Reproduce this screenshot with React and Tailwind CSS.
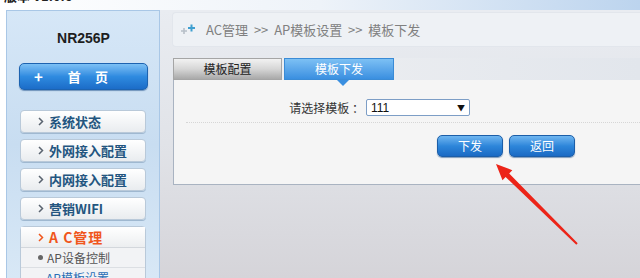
import React from "react";

const cjk = { fontFamily: '"Noto Sans CJK SC", "Liberation Sans", sans-serif' };

const Chevron = ({ color }) => (
  <svg width="6" height="9" viewBox="0 0 6 9" className="ml-[17px] mr-[5px]">
    <path d="M1 1l3.5 3.5L1 8" fill="none" stroke={color} strokeWidth="1.5" />
  </svg>
);

const MenuItem = ({ label }) => (
  <div className="h-[23px] w-[126px] flex items-center rounded-[4px] border border-[#b9c9d9] bg-gradient-to-b from-white to-[#e9ecef] shadow-[0_1px_0_#9fb8d0]">
    <Chevron color="#5a6470" />
    <span className="text-[13px] font-bold text-[#23557f] leading-none">{label}</span>
  </div>
);

const BlueButton = ({ label }) => (
  <button className="w-[66px] h-[22px] rounded-[5px] border border-[#1c5ea8] bg-gradient-to-b from-[#6fb6f0] via-[#2d86da] to-[#1b6ac4] text-white text-[12px] leading-none shadow-[0_1px_1px_#7f9bbb]">
    {label}
  </button>
);

export default function App() {
  return (
    <div className="relative w-[640px] h-[278px] overflow-hidden bg-white" style={cjk}>
      {/* top strip */}
      <div className="h-[10px] overflow-hidden bg-gradient-to-r from-white via-[#eef3f9] to-[#bcd4ee]">
        <div className="-mt-[11px] pl-[4px] text-[13px] font-bold text-[#222] leading-[14px]">版本 V1.0.6</div>
      </div>

      <div className="flex h-[268px]">
        {/* sidebar */}
        <div className="w-[160px] pl-[6px] bg-white">
          <div className="h-full border-l border-r border-t border-[#a9c7e6] bg-gradient-to-b from-[#d6e7f7] via-[#c8ddf1] to-[#d8e8f6] pl-[12px]">
            <div className="pt-[19px] h-[52px] w-[129px] text-center text-[14px] font-bold text-[#1e1e1e] leading-[16px]" style={{ fontFamily: '"Liberation Sans", sans-serif' }}>
              NR256P
            </div>
            <div className="w-[129px] h-[27px] rounded-[5px] border border-[#1d63b0] bg-gradient-to-b from-[#7cc0f4] via-[#2f8be0] to-[#1c6cc8] flex items-center text-white font-bold text-[13px] shadow-[0_1px_1px_#6f93bb]">
              <span className="ml-[14px] text-[15px] leading-none">+</span>
              <span className="ml-[25px]">首</span>
              <span className="ml-[14px]">页</span>
            </div>
            <div className="mt-[20px] ml-[1px] flex flex-col gap-[6px]">
              <MenuItem label="系统状态" />
              <MenuItem label="外网接入配置" />
              <MenuItem label="内网接入配置" />
              <MenuItem label="营销WIFI" />
              <div className="w-[126px] h-[80px] rounded-t-[4px] border border-[#b9c9d9] bg-[#f2f3f5]">
                <div className="h-[21px] flex items-center bg-gradient-to-b from-white to-[#eceef0] border-b border-[#d3d7dc]">
                  <Chevron color="#f0561c" />
                  <span className="text-[14px] font-bold text-[#f0561c] leading-none tracking-[1px]">A C管理</span>
                </div>
                <div className="h-[20px] flex items-center border-b border-[#dcdfe3]">
                  <span className="ml-[17px] w-[5px] h-[5px] rounded-full bg-[#666]"></span>
                  <span className="ml-[4px] text-[12px] text-[#555] leading-none">AP设备控制</span>
                </div>
                <div className="h-[20px] flex items-center">
                  <span className="ml-[25px] text-[12px] text-[#2a6fb5] leading-none">AP模板设置</span>
                </div>
              </div>
            </div>
          </div>
        </div>

        {/* main */}
        <div className="flex-1 bg-gradient-to-b from-[#e9ecf1] via-[#e1e3e8] to-[#d5d4d9] pl-[12px] pt-[2px]">
          <div className="h-[35px] rounded-l-[4px] bg-[#eef1f5] border border-r-0 border-[#e2e6ec] flex items-center">
            <svg width="18" height="14" viewBox="0 0 18 14" className="ml-[7px]">
              <path d="M1 8h6M4 5v6" stroke="#b7bfc8" strokeWidth="1.6" />
              <path d="M8 5h7M11.5 1.5v7" stroke="#3f9fd0" strokeWidth="2" />
            </svg>
            <span className="ml-[8px] text-[13px] text-[#808080] leading-none whitespace-pre">AC管理  &gt;&gt;  AP模板设置  &gt;&gt;  模板下发</span>
          </div>

          <div className="mt-[11px] ml-[1px] h-[22px] flex bg-gradient-to-r from-[#f0f1f3] to-[#e2e6ec]">
            <div className="w-[109px] h-[22px] border border-[#a5a5a5] bg-gradient-to-b from-[#f2f2f2] via-[#d6d6d6] to-[#a9a9a9] flex items-center justify-center text-[12px] text-[#222] leading-none">
              模板配置
            </div>
            <div className="relative ml-[2px] w-[110px] h-[22px] border border-[#3a8bd6] bg-gradient-to-b from-[#7cc0f4] to-[#3a8fe0] flex items-center justify-center text-[12px] text-white leading-none">
              模板下发
              <span className="absolute left-[52px] top-[21px] w-0 h-0 border-l-[6px] border-r-[6px] border-t-[6px] border-l-transparent border-r-transparent border-t-[#3a8fe0]"></span>
            </div>
          </div>

          <div className="ml-[1px] h-[105px] bg-[#f5f5f5] border-l border-b border-[#a9b3c1]">
            <div className="pt-[19px] flex items-center">
              <span className="w-[190px] text-right text-[12px] text-[#333] leading-none">请选择模板 ：</span>
              <div className="ml-[2px] w-[104px] h-[17px] border border-[#7d9ec6] rounded-[2px] bg-white flex items-center justify-between px-[4px]">
                <span className="text-[12px] text-[#111] leading-none" style={{ fontFamily: '"Liberation Sans", sans-serif' }}>111</span>
                <span className="text-[8px] text-[#111] leading-none">▼</span>
              </div>
            </div>
            <div className="mt-[6px] ml-[12px] border-t border-dotted border-[#d6d6d6]"></div>
            <div className="mt-[12px] ml-[263px] flex gap-[6px]">
              <BlueButton label="下发" />
              <BlueButton label="返回" />
            </div>
          </div>
        </div>
      </div>

      {/* red arrow */}
      <svg className="absolute left-0 top-0 pointer-events-none" width="640" height="278" viewBox="0 0 640 278">
        <polygon
          points="496,164 512.3,170.2 509.2,173.4 577.7,243.3 576.3,244.7 505.6,177 502.5,180.2"
          fill="#ec2418"
        />
      </svg>
    </div>
  );
}
